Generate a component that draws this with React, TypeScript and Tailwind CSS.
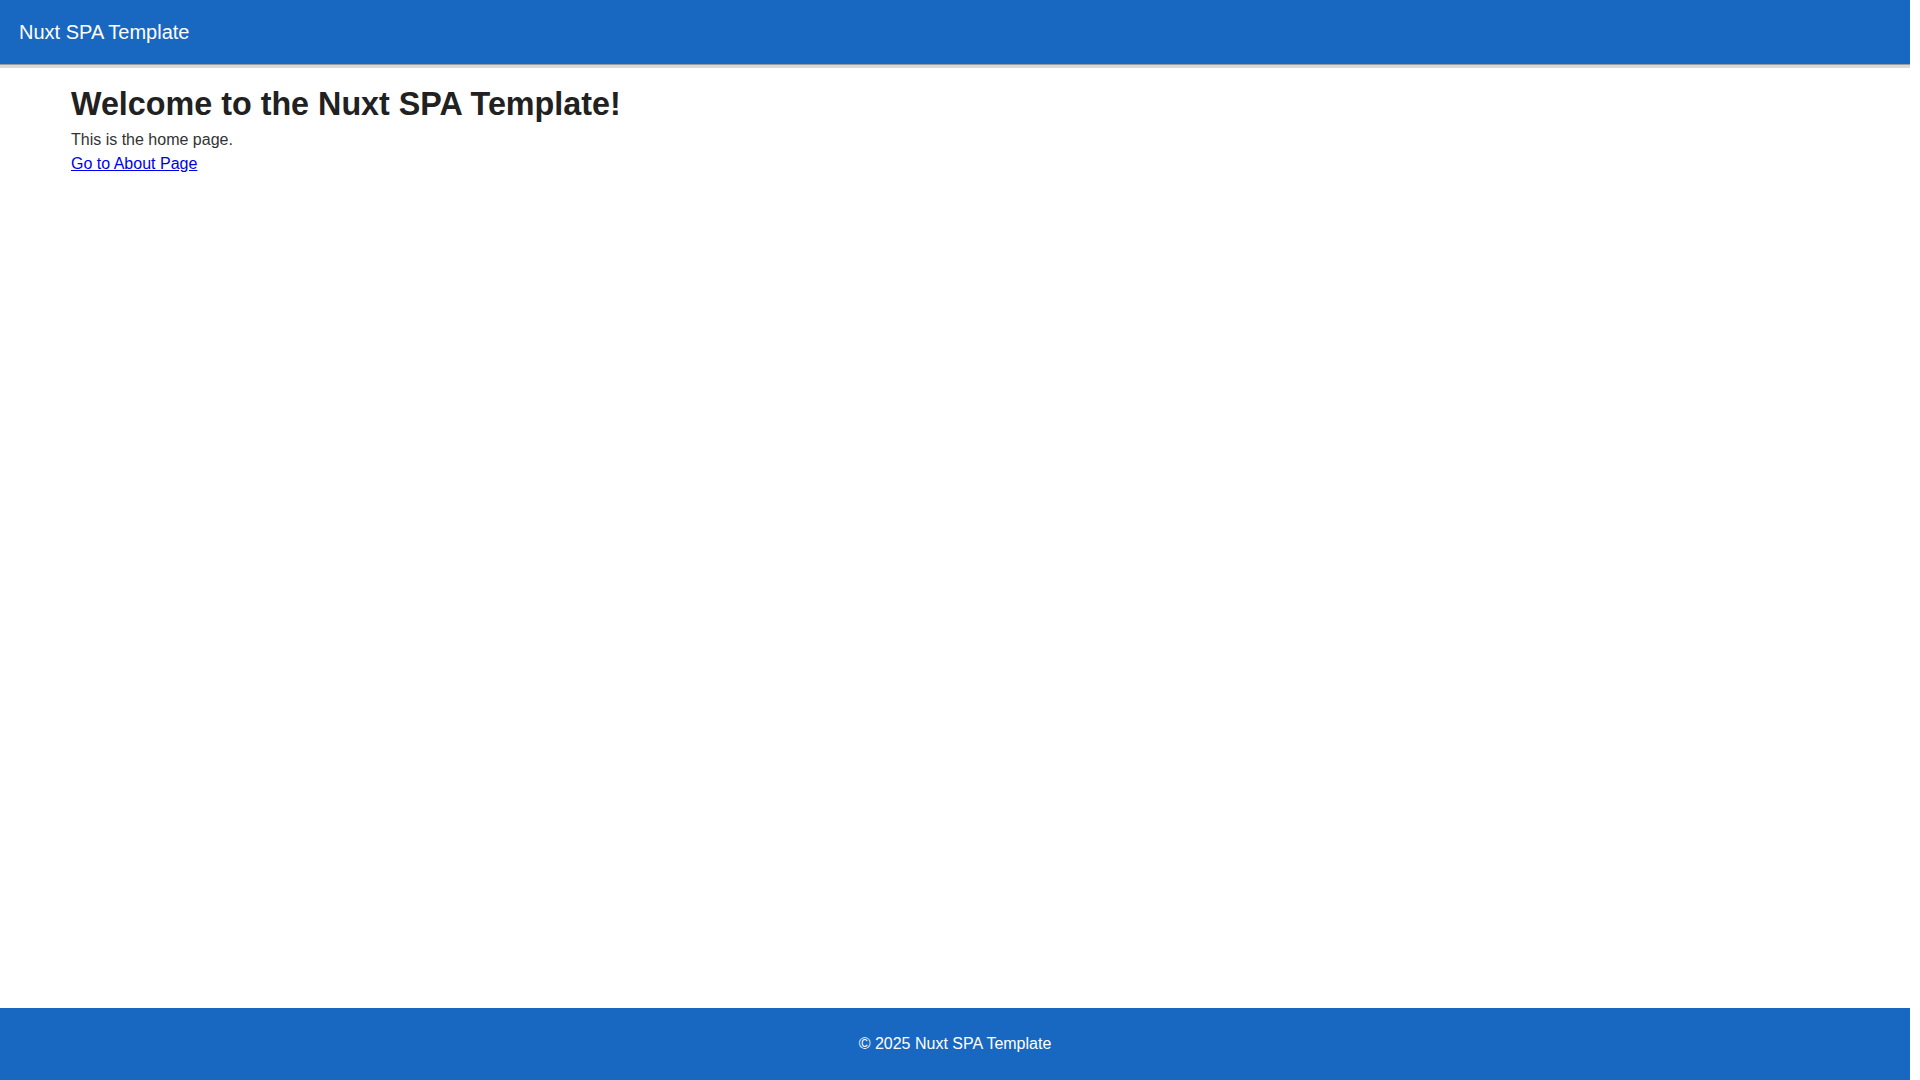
import React from 'react';

const App: React.FC = () => {
  return (
    <div className="flex min-h-screen w-[1910px] flex-col bg-white font-['Liberation_Sans',Arial,sans-serif]">
      {/* App bar */}
      <header className="relative z-10 flex h-16 items-center bg-[#1867c0] px-[19px] shadow-[0_1px_0_#9e9e9e,0_4px_0_#d9d9d9]">
        <span className="text-xl text-white">Nuxt SPA Template</span>
      </header>

      {/* Page content */}
      <main className="flex-1 pl-[71px]">
        <h1 className="mt-[22px] mb-[5px] text-[32.3px] leading-[normal] font-bold text-[#212121]">
          Welcome to the Nuxt SPA Template!
        </h1>
        <p className="text-base leading-6 text-[#333333]">This is the home page.</p>
        <a href="#" className="text-base leading-6 text-[#0000ee] underline">
          Go to About Page
        </a>
      </main>

      {/* Footer */}
      <footer className="flex h-[72px] items-center justify-center bg-[#1867c0]">
        <span className="text-base text-white">© 2025 Nuxt SPA Template</span>
      </footer>
    </div>
  );
};

export default App;
